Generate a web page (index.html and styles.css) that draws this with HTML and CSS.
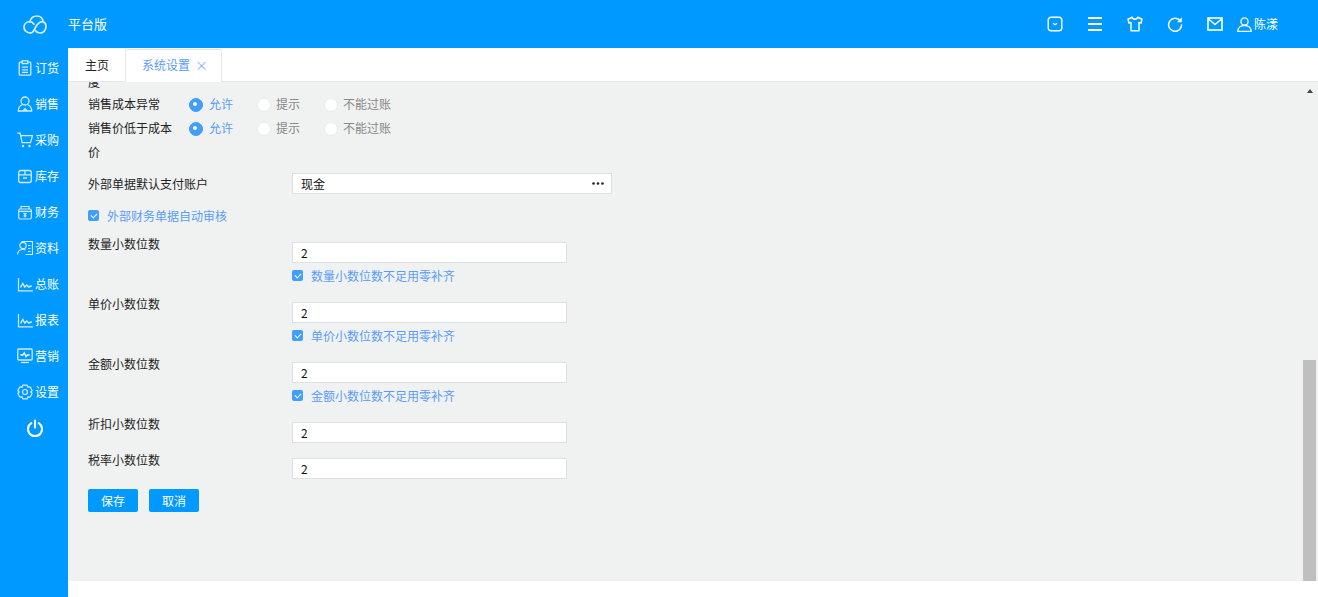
FILE: index.html
```html
<!DOCTYPE html>
<html lang="zh-CN">
<head>
<meta charset="utf-8">
<title>系统设置</title>
<link rel="stylesheet" href="styles.css">
</head>
<body>
<header class="topbar">
  <div class="logo">
    <svg width="24" height="19" viewBox="0 0 24 19" fill="none" stroke="#d8eeff" stroke-width="1.700" stroke-linecap="round"><path d="M7.500 18C3.500 18 1 15.200 1 12.200 1 9 3.500 6.700 6.800 6.700 7.800 3.200 10.600 1 14 1c3.500 0 6 2.600 6 5.600 2 1 3 3 3 5 0 3.400-2.500 6.400-6 6.400-2.200 0-3.800-1-4.800-2.500"/><path d="M20 6.600c-3.500 0-5.300 1.900-7 4.900l-2.500 4.500C9.800 17.200 8.800 18 7.500 18"/><path d="M6.800 6.700c1.800.1 3.200 1.100 4.200 2.500"/></svg>
  </div>
  <div class="brand">平台版</div>
  <div class="top-actions">
    <svg class="ti" width="16" height="16" viewBox="0 0 16 16" fill="none" stroke="#fff" stroke-width="1.400"><rect x="1.200" y="1.200" width="13.600" height="13.600" rx="2.800"/><path d="M6 7.200l2 1.600 2-1.600" stroke-width="1.100"/></svg>
    <svg class="ti" width="16" height="16" viewBox="0 0 16 16" fill="none" stroke="#fff" stroke-width="2"><path d="M1 2h14M1 8h14M1 14h14" /></svg>
    <svg class="ti" width="16" height="16" viewBox="0 0 16 16" fill="none" stroke="#fff" stroke-width="1.500" stroke-linejoin="round"><path d="M5.300 1.200L1 3.200l.9 3.800 2.100-.5V14.800h8V6.500l2.100.5.900-3.800-4.300-2c-.5 2.600-5.200 2.600-5.700 0z"/></svg>
    <svg class="ti" width="16" height="16" viewBox="0 0 16 16" fill="none" stroke="#fff" stroke-width="1.500"><path d="M13 4.500A6.500 6.500 0 1 0 14.600 8.500"/><path d="M14.800 1.200v5h-5z" fill="#fff" stroke="none"/></svg>
    <svg class="ti mail" width="16" height="14" viewBox="0 0 16 14" fill="none" stroke="#fff" stroke-width="1.600"><rect x="1" y="1" width="14" height="12"/><path d="M1.500 2l6.500 5.500L14.500 2"/></svg>
    <div class="user">
      <svg width="15" height="15" viewBox="0 0 15 15" fill="none" stroke="#fff" stroke-width="1.300"><circle cx="7.500" cy="4.500" r="3.600"/><path d="M.8 14.300c0-3.400 2.500-5.800 6.700-5.800s6.700 2.400 6.700 5.800z"/></svg>
      <span>陈漾</span>
    </div>
  </div>
</header>
<div class="shell">
  <nav class="sidebar">
    <a class="nav-item"><svg width="16" height="16" viewBox="0 0 16 16" fill="none" stroke="#d0eaff" stroke-width="1.300"><rect x="2.200" y="2.200" width="11.600" height="13" rx="1"/><rect x="5.200" y=".8" width="5.600" height="2.800" fill="#0099ff"/><path d="M5 7.200h6M5 9.800h6M5 12.300h6"/></svg><span>订货</span></a>
    <a class="nav-item"><svg width="16" height="16" viewBox="0 0 16 16" fill="none" stroke="#d0eaff" stroke-width="1.300"><circle cx="8" cy="5" r="4"/><path d="M5.500 8.500C3 9.500 1.300 11.500 1.300 15h13.400c0-3.500-1.700-5.500-4.200-6.500M8 12.500L6 15M8 12.500L10 15"/></svg><span>销售</span></a>
    <a class="nav-item"><svg width="16" height="16" viewBox="0 0 16 16" fill="none" stroke="#d0eaff" stroke-width="1.300"><path d="M.3 1.200h2.800l2 9.500h8.400l2-7H3.500"/><circle cx="6" cy="14" r="1.200" fill="#d0eaff" stroke="none"/><circle cx="12.500" cy="14" r="1.200" fill="#d0eaff" stroke="none"/></svg><span>采购</span></a>
    <a class="nav-item"><svg width="16" height="16" viewBox="0 0 16 16" fill="none" stroke="#d0eaff" stroke-width="1.300"><rect x="1.700" y="2.500" width="12.600" height="12" rx="2"/><path d="M1.700 6.800h12.600M8 2.500v4.300M6 10h4"/></svg><span>库存</span></a>
    <a class="nav-item"><svg width="16" height="16" viewBox="0 0 16 16" fill="none" stroke="#d0eaff" stroke-width="1.200"><rect x="1.700" y="5" width="12.600" height="10" rx="1.500"/><path d="M4 5V2.500h8V5M1.700 7.300h12.600M6.500 8.800L8 10.500l1.500-1.700M8 10.500V13.500M6.500 11.800h3"/></svg><span>财务</span></a>
    <a class="nav-item"><svg width="16" height="16" viewBox="0 0 16 16" fill="none" stroke="#d0eaff" stroke-width="1.200"><circle cx="6" cy="5.500" r="3.200"/><path d="M.6 14.500c0-3.300 2-5 5.400-5 1 0 2 .2 2.700.6M4.500 1.500h11v13H8.500M11 5.500h2.500M11 8.500h2.500M11 11.500h2.500"/></svg><span>资料</span></a>
    <a class="nav-item"><svg width="16" height="16" viewBox="0 0 16 16" fill="none" stroke="#d0eaff" stroke-width="1.200"><path d="M1.500 2v12.800H16"/><path d="M3.500 11.500l2.300-4 2 3.500 2-2 2 2 3-1.300" stroke-width="1.500"/></svg><span>总账</span></a>
    <a class="nav-item"><svg width="16" height="16" viewBox="0 0 16 16" fill="none" stroke="#d0eaff" stroke-width="1.200"><path d="M1.500 2v12.800H16"/><path d="M3.500 11.500l2.300-4 2 3.500 2-2 2 2 3-1.300" stroke-width="1.500"/></svg><span>报表</span></a>
    <a class="nav-item"><svg width="16" height="16" viewBox="0 0 16 16" fill="none" stroke="#d0eaff" stroke-width="1.300"><rect x=".8" y="1" width="14.400" height="11" rx="1"/><path d="M3.500 7h2.300L7.300 4.800l1.700 4 1.300-1.800h2.200" stroke="#fff"/><path d="M4 14.500h8"/></svg><span>营销</span></a>
    <a class="nav-item"><svg width="16" height="16" viewBox="0 0 16 16" fill="none" stroke="#d0eaff" stroke-width="1.200" stroke-linejoin="round"><path d="M5.800 1.200h4.400l.7 2 2.100-.4 2.200 3.700-1.400 1.500 1.400 1.500-2.200 3.700-2.100-.4-.7 2H5.800l-.7-2-2.100.4L.8 9.500 2.200 8 .8 6.500 3 2.800l2.100.4z"/><circle cx="8" cy="8" r="2.500"/></svg><span>设置</span></a>
    <a class="nav-power"><svg width="16" height="18" viewBox="0 0 16 18" fill="none" stroke="#fff" stroke-width="2.100" stroke-linecap="round"><path d="M8 1.500v7M4.300 4.200A7 7 0 1 0 11.700 4.200"/></svg></a>
  </nav>
  <main class="main">
    <div class="tabs">
      <div class="tab">主页</div>
      <div class="tab active">系统设置<span class="close">×</span></div>
    </div>
    <div class="page">
      <form class="form">
        <div class="row-clipped">度</div>
        <div class="row radio-row">
          <div class="label">销售成本异常</div>
          <label class="radio on">允许</label><label class="radio">提示</label><label class="radio">不能过账</label>
        </div>
        <div class="row radio-row">
          <div class="label">销售价低于成本价</div>
          <label class="radio on">允许</label><label class="radio">提示</label><label class="radio">不能过账</label>
        </div>
        <div class="row account">
          <div class="field-label">外部单据默认支付账户</div>
          <div class="select">现金<svg class="dots" width="12" height="3" viewBox="0 0 12 3" fill="#222"><circle cx="1.500" cy="1.500" r="1.300"/><circle cx="6" cy="1.500" r="1.300"/><circle cx="10.500" cy="1.500" r="1.300"/></svg></div>
        </div>
        <div class="row check-row"><label class="check">外部财务单据自动审核</label></div>
        <div class="num-row"><div class="field-label">数量小数位数</div><div class="num-field"><div class="input">2</div><label class="check">数量小数位数不足用零补齐</label></div></div>
        <div class="num-row"><div class="field-label">单价小数位数</div><div class="num-field"><div class="input">2</div><label class="check">单价小数位数不足用零补齐</label></div></div>
        <div class="num-row"><div class="field-label">金额小数位数</div><div class="num-field"><div class="input">2</div><label class="check">金额小数位数不足用零补齐</label></div></div>
        <div class="num-row short"><div class="field-label">折扣小数位数</div><div class="num-field"><div class="input">2</div></div></div>
        <div class="num-row short"><div class="field-label">税率小数位数</div><div class="num-field"><div class="input">2</div></div></div>
        <div class="buttons"><button type="button" class="btn">保存</button><button type="button" class="btn">取消</button></div>
      </form>
      <div class="scrollbar">
        <div class="arrow"></div>
        <div class="thumb"></div>
      </div>
    </div>
    <div class="foot"></div>
  </main>
</div>
</body>
</html>
```
FILE: styles.css
```css
* { box-sizing: border-box; }
html, body { margin: 0; height: 100%; overflow: hidden; }
body {
  width: 1318px;
  height: 597px;
  font: 12px/24px "Noto Sans CJK SC", "Liberation Sans", sans-serif;
  color: #222;
  background: #fff;
  display: flex;
  flex-direction: column;
}
.topbar {
  height: 48px;
  flex: none;
  background: #0099ff;
  color: #fff;
  display: flex;
  align-items: center;
}
.logo { width: 68px; display: flex; justify-content: center; padding-left: 1px; }
.brand { font-size: 13px; }
.top-actions { margin-left: auto; display: flex; align-items: center; padding-right: 40px; }
.ti { margin-left: 24px; display: block; }
.user { display: flex; align-items: center; gap: 2px; margin-left: 14px; }
.shell { flex: 1; display: flex; min-height: 0; }
.sidebar {
  width: 68px;
  flex: none;
  background: #0099ff;
  color: #fff;
  padding-top: 2px;
}
.nav-item {
  height: 36px;
  display: flex;
  align-items: center;
  gap: 2px;
  padding-left: 17px;
}
.nav-item span { line-height: 16px; }
.nav-power { height: 36px; display: flex; align-items: center; justify-content: center; padding-left: 1px; }
.main { flex: 1; display: flex; flex-direction: column; min-width: 0; }
.tabs {
  height: 34px;
  flex: none;
  background: #fff;
  border-bottom: 1px solid #e4e7ed;
  display: flex;
  padding: 1px 0 0 1px;
}
.tab {
  width: 57px;
  text-align: center;
  line-height: 32px;
  color: #222;
  border-right: 1px solid #e4e7ed;
}
.tab.active {
  width: 96px;
  padding-left: 16px;
  text-align: left;
  color: #5a9cf8;
  border-top: 1px solid #e4e7ed;
  border-radius: 2px 2px 0 0;
  margin-bottom: -1px;
  background: #fff;
  line-height: 30px;
}
.close { margin-left: 5px; color: #7fb2f8; font-size: 13px; }
.page {
  height: 499px;
  flex: none;
  background: #f0f2f2;
  display: flex;
  overflow: hidden;
}
.foot { flex: 1; background: #fff; }
.form { flex: 1; padding: 0 20px; min-width: 0; }
.row-clipped { height: 10px; line-height: 0; }
.row { display: flex; }
.radio-row .label { width: 85px; flex: none; }
.radio {
  position: relative;
  height: 24px;
  color: #888;
  padding-left: 19px;
  flex: none;
}
.radio::before {
  content: "";
  position: absolute;
  left: 0; top: 6px;
  width: 12px; height: 12px;
  border-radius: 50%;
  background: #fff;
  border: 1px solid #e8eaee;
}
.radio.on { color: #5a9cf8; padding-left: 20px; }
.radio.on::before { background: #409eff; border-color: #409eff; }
.radio.on::after {
  content: "";
  position: absolute;
  left: 4px; top: 10px;
  width: 4px; height: 4px;
  border-radius: 50%;
  background: #fff;
}
.radio:nth-child(2) { margin-left: 16px; width: 68px; }
.radio:nth-child(3) { width: 67px; }
.account { margin-top: 7px; height: 24px; align-items: center; }
.field-label { width: 204px; flex: none; }
.account .field-label { position: relative; top: 1px; }
.select, .input {
  height: 21px;
  line-height: 19px;
  background: #fff;
  border: 1px solid #dcdfe6;
  padding-left: 8px;
  color: #111;
}
.select { width: 320px; display: flex; justify-content: space-between; align-items: center; padding-right: 7px; }
.dots { display: block; }
.input { width: 275px; margin-top: 10px; }
.check-row { margin-top: 9px; }
.check {
  display: block;
  position: relative;
  height: 24px;
  padding-left: 19px;
  color: #5a9cf8;
}
.check::before {
  content: "";
  position: absolute;
  left: 0; top: 6px;
  width: 11px; height: 11px;
  border-radius: 2px;
  background: #409eff;
}
.check::after {
  content: "";
  position: absolute;
  left: 3.500px; top: 8px;
  width: 3px; height: 5px;
  border: solid #fff;
  border-width: 0 1px 1px 0;
  transform: rotate(45deg);
}
.form > .row.check-row + .num-row { margin-top: 4px; }
.num-row { display: flex; height: 60px; }
.num-row .check { margin-top: 1px; }
.num-row.short { height: 36px; }
.buttons { display: flex; gap: 11px; margin-top: 5px; }
.btn {
  width: 50px;
  height: 23px;
  padding: 0;
  border: 0;
  border-radius: 2px;
  background: #0099ff;
  color: #fff;
  font: inherit;
  line-height: 23px;
}
.scrollbar {
  width: 13px;
  margin-right: 2px;
  flex: none;
  display: flex;
  flex-direction: column;
  align-items: center;
}
.arrow {
  margin-top: 7px;
  width: 0; height: 0;
  border: solid transparent;
  border-width: 0 3.500px 4px;
  border-bottom-color: #444;
}
.thumb { margin-top: auto; width: 13px; height: 221px; background: #bfbfbf; }
```
